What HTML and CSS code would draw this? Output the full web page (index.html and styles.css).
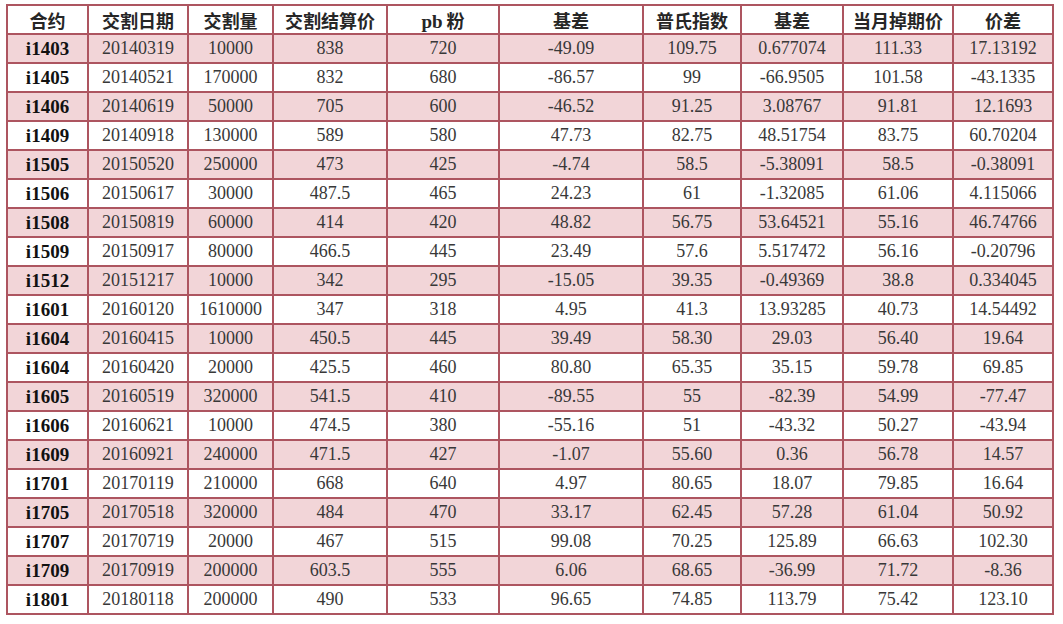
FILE: index.html
```html
<!DOCTYPE html>
<html lang="zh">
<head>
<meta charset="utf-8">
<title>交割数据</title>
<link rel="stylesheet" href="styles.css">
</head>
<body>
<table class="data">
<colgroup>
<col class="c1"><col class="c2"><col class="c3"><col class="c4"><col class="c5">
<col class="c6"><col class="c7"><col class="c8"><col class="c9"><col class="c10">
</colgroup>
<thead>
<tr><th>合约</th><th>交割日期</th><th>交割量</th><th>交割结算价</th><th><span class="lat">pb</span> 粉</th><th>基差</th><th>普氏指数</th><th>基差</th><th>当月掉期价</th><th>价差</th></tr>
</thead>
<tbody>
<tr class="alt"><td class="k">i1403</td><td>20140319</td><td>10000</td><td>838</td><td>720</td><td>-49.09</td><td>109.75</td><td>0.677074</td><td>111.33</td><td>17.13192</td></tr>
<tr><td class="k">i1405</td><td>20140521</td><td>170000</td><td>832</td><td>680</td><td>-86.57</td><td>99</td><td>-66.9505</td><td>101.58</td><td>-43.1335</td></tr>
<tr class="alt"><td class="k">i1406</td><td>20140619</td><td>50000</td><td>705</td><td>600</td><td>-46.52</td><td>91.25</td><td>3.08767</td><td>91.81</td><td>12.1693</td></tr>
<tr><td class="k">i1409</td><td>20140918</td><td>130000</td><td>589</td><td>580</td><td>47.73</td><td>82.75</td><td>48.51754</td><td>83.75</td><td>60.70204</td></tr>
<tr class="alt"><td class="k">i1505</td><td>20150520</td><td>250000</td><td>473</td><td>425</td><td>-4.74</td><td>58.5</td><td>-5.38091</td><td>58.5</td><td>-0.38091</td></tr>
<tr><td class="k">i1506</td><td>20150617</td><td>30000</td><td>487.5</td><td>465</td><td>24.23</td><td>61</td><td>-1.32085</td><td>61.06</td><td>4.115066</td></tr>
<tr class="alt"><td class="k">i1508</td><td>20150819</td><td>60000</td><td>414</td><td>420</td><td>48.82</td><td>56.75</td><td>53.64521</td><td>55.16</td><td>46.74766</td></tr>
<tr><td class="k">i1509</td><td>20150917</td><td>80000</td><td>466.5</td><td>445</td><td>23.49</td><td>57.6</td><td>5.517472</td><td>56.16</td><td>-0.20796</td></tr>
<tr class="alt"><td class="k">i1512</td><td>20151217</td><td>10000</td><td>342</td><td>295</td><td>-15.05</td><td>39.35</td><td>-0.49369</td><td>38.8</td><td>0.334045</td></tr>
<tr><td class="k">i1601</td><td>20160120</td><td>1610000</td><td>347</td><td>318</td><td>4.95</td><td>41.3</td><td>13.93285</td><td>40.73</td><td>14.54492</td></tr>
<tr class="alt"><td class="k">i1604</td><td>20160415</td><td>10000</td><td>450.5</td><td>445</td><td>39.49</td><td>58.30</td><td>29.03</td><td>56.40</td><td>19.64</td></tr>
<tr><td class="k">i1604</td><td>20160420</td><td>20000</td><td>425.5</td><td>460</td><td>80.80</td><td>65.35</td><td>35.15</td><td>59.78</td><td>69.85</td></tr>
<tr class="alt"><td class="k">i1605</td><td>20160519</td><td>320000</td><td>541.5</td><td>410</td><td>-89.55</td><td>55</td><td>-82.39</td><td>54.99</td><td>-77.47</td></tr>
<tr><td class="k">i1606</td><td>20160621</td><td>10000</td><td>474.5</td><td>380</td><td>-55.16</td><td>51</td><td>-43.32</td><td>50.27</td><td>-43.94</td></tr>
<tr class="alt"><td class="k">i1609</td><td>20160921</td><td>240000</td><td>471.5</td><td>427</td><td>-1.07</td><td>55.60</td><td>0.36</td><td>56.78</td><td>14.57</td></tr>
<tr><td class="k">i1701</td><td>20170119</td><td>210000</td><td>668</td><td>640</td><td>4.97</td><td>80.65</td><td>18.07</td><td>79.85</td><td>16.64</td></tr>
<tr class="alt"><td class="k">i1705</td><td>20170518</td><td>320000</td><td>484</td><td>470</td><td>33.17</td><td>62.45</td><td>57.28</td><td>61.04</td><td>50.92</td></tr>
<tr><td class="k">i1707</td><td>20170719</td><td>20000</td><td>467</td><td>515</td><td>99.08</td><td>70.25</td><td>125.89</td><td>66.63</td><td>102.30</td></tr>
<tr class="alt"><td class="k">i1709</td><td>20170919</td><td>200000</td><td>603.5</td><td>555</td><td>6.06</td><td>68.65</td><td>-36.99</td><td>71.72</td><td>-8.36</td></tr>
<tr><td class="k">i1801</td><td>20180118</td><td>200000</td><td>490</td><td>533</td><td>96.65</td><td>74.85</td><td>113.79</td><td>75.42</td><td>123.10</td></tr>
</tbody>
</table>
</body>
</html>
```
FILE: styles.css
```css
html, body {
  margin: 0;
  padding: 0;
  background: #ffffff;
}
body {
  padding: 4px 0 0 6px;
}
.data {
  border-collapse: collapse;
  table-layout: fixed;
  width: 1048px;
  border: 2px solid #ad5560;
}
.c1 { width: 81px; }
.c2 { width: 100px; }
.c3 { width: 85px; }
.c4 { width: 114px; }
.c5 { width: 112px; }
.c6 { width: 144px; }
.c7 { width: 98px; }
.c8 { width: 102px; }
.c9 { width: 110px; }
.c10 { width: 100px; }
.data th, .data td {
  border: 2px solid #ad5560;
  height: 27px;
  padding: 0;
  text-align: center;
  vertical-align: middle;
  white-space: nowrap;
  overflow: hidden;
}
.data th {
  font-family: "Noto Sans CJK SC", "Noto Sans", sans-serif;
  font-weight: 700;
  font-size: 18px;
  color: #262626;
  background: #ffffff;
}
.data th .lat {
  font-family: "Liberation Serif", serif;
  font-size: 19px;
}
.data td {
  font-family: "Liberation Serif", "Noto Sans CJK SC", serif;
  font-size: 18px;
  color: #383838;
}
.data td.k {
  font-weight: 700;
  font-size: 19px;
  color: #111111;
}
.data tr.alt td {
  background: #f2d5d8;
}
```
